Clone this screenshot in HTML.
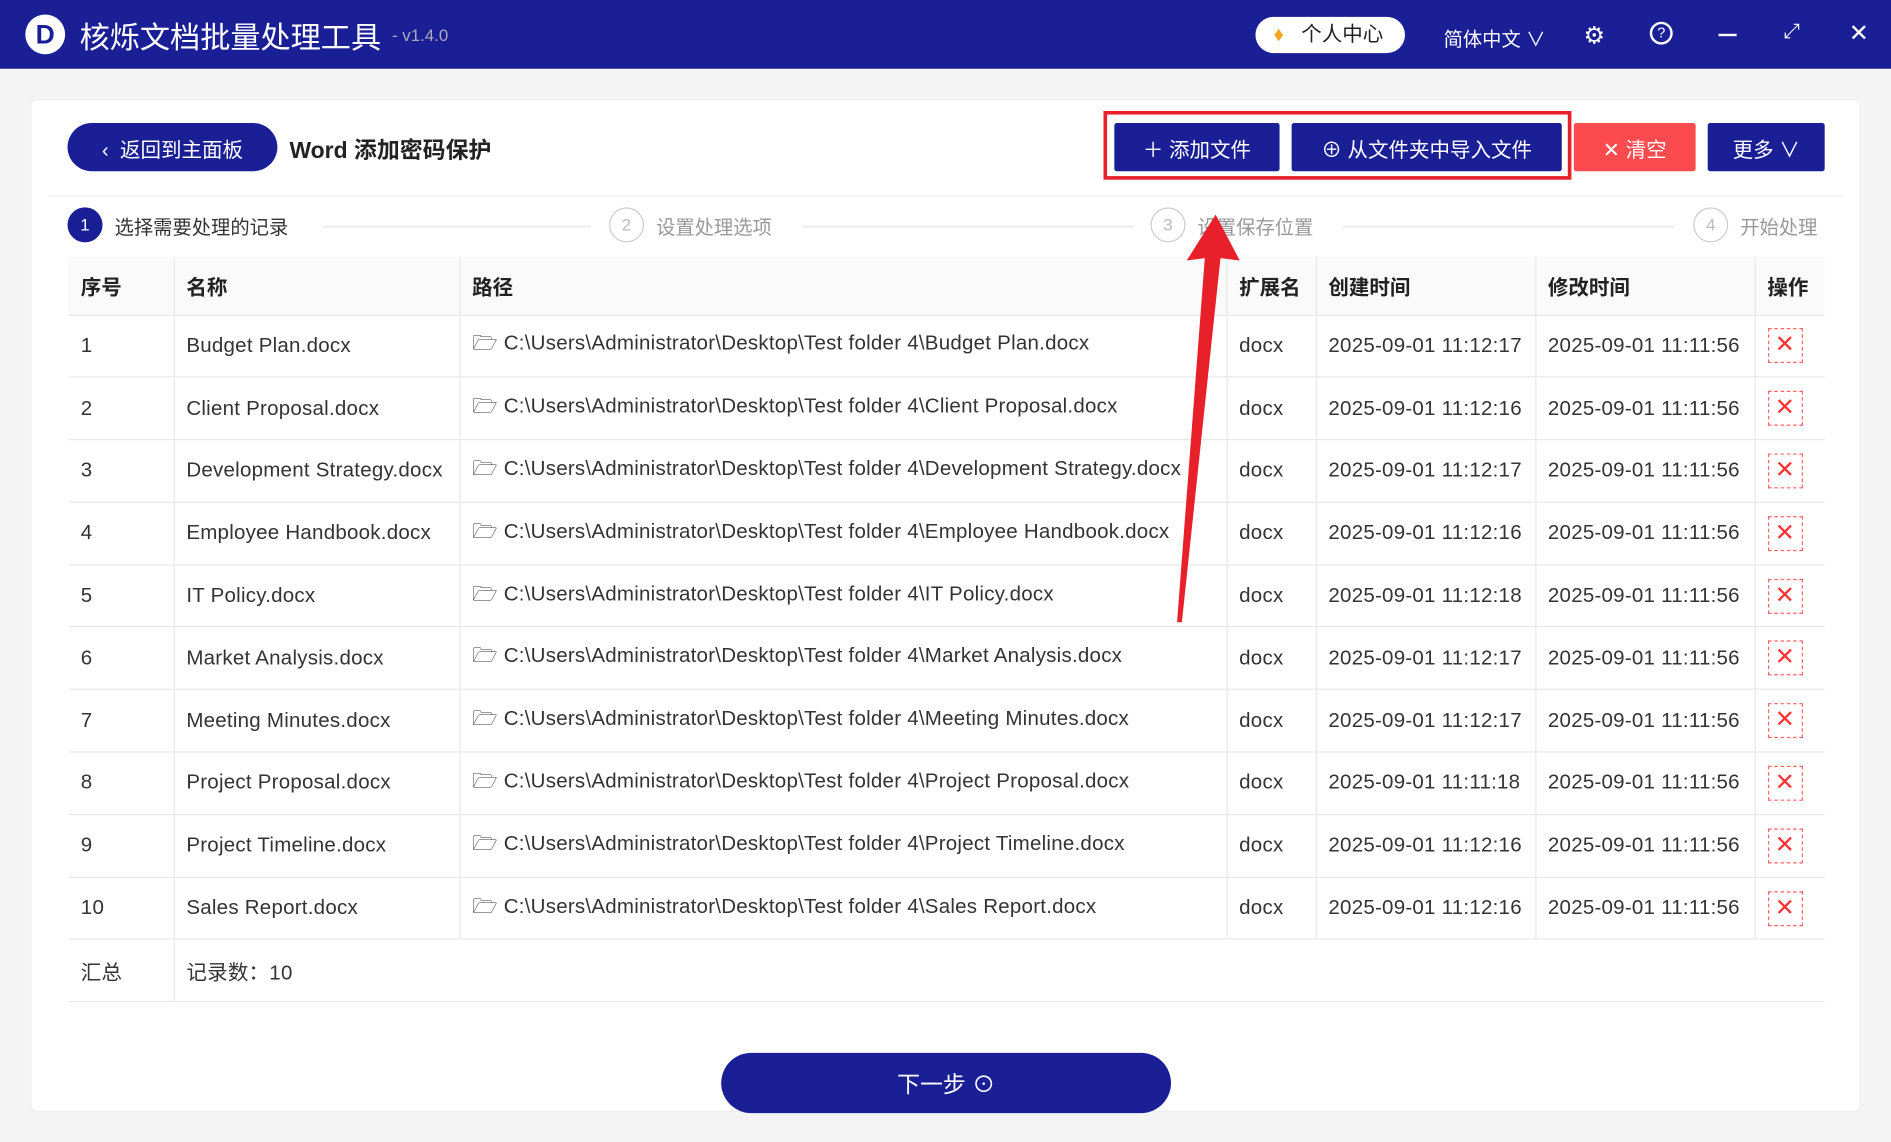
<!DOCTYPE html>
<html><head><meta charset="utf-8"><style>
*{margin:0;padding:0;box-sizing:border-box}
body{width:1891px;height:1142px;overflow:hidden;background:#8a9aa6;font-family:"Liberation Sans","Noto Sans CJK SC",sans-serif}
#s{width:1568px;height:947px;transform:scale(1.206);transform-origin:0 0;position:relative;background:#f4f4f5}
.tb{position:absolute;left:0;top:0;width:1568px;height:57px;background:#1a1f96;color:#fff}
.abs{position:absolute}
.card{position:absolute;left:25px;top:82px;width:1518px;height:840px;background:#fff;border-radius:6px;border:1px solid #eee}
.btn{position:absolute;top:102px;height:40px;background:#1a1f96;color:#fff;font-size:17px;display:flex;align-items:center;justify-content:center;border-radius:2px}
table{position:absolute;left:57px;top:213px;width:1456px;border-collapse:collapse;font-size:17px;letter-spacing:0.2px;color:#333;table-layout:fixed}
td,th{height:51.8px;border-bottom:1px solid #e8e8e8;text-align:left;padding-left:10px;white-space:nowrap;overflow:hidden}
th{height:48px;font-weight:bold;color:#222;background:#fafafa;letter-spacing:0}
td+td,th+th{border-left:1px solid #e8e8e8}
.x{display:inline-block;width:29px;height:29px;border:1px dashed #f66;color:#f33;text-align:center;line-height:27px;font-size:20px;letter-spacing:0}
.step{position:absolute;top:172px;font-size:16px;color:#999;display:flex;align-items:center}
.c{width:29px;height:29px;border-radius:50%;border:1px solid #ccc;text-align:center;line-height:27px;margin-right:10px;font-size:14px;color:#bbb}
.ln{position:absolute;top:187px;height:2px;background:#eee}
</style></head><body><div id="s">
<div class="tb">
<div class="abs" style="left:21px;top:12px;width:33px;height:33px;border-radius:50%;background:#fff;color:#1a1f96;font-weight:bold;font-size:22px;text-align:center;line-height:33px">D</div>
<div class="abs" style="left:66px;top:12px;font-size:25px">核烁文档批量处理工具</div>
<div class="abs" style="left:325px;top:21px;font-size:14px;color:#aab">- v1.4.0</div>
<div class="abs" style="left:1041px;top:14px;width:124px;height:30px;border-radius:15px;background:#fff;color:#222;font-size:17px;line-height:30px;padding-left:38px"><span style="position:absolute;left:15px;color:#f5a623">♦</span>个人中心</div>
<div class="abs" style="left:1197px;top:19px;font-size:16px">简体中文 ∨</div>
<div class="abs" style="left:1313px;top:17px;font-size:20px">⚙</div>
<div class="abs" style="left:1368px;top:18px;width:19px;height:19px;border:2px solid #fff;border-radius:50%;font-size:12px;text-align:center;line-height:15px">?</div>
<div class="abs" style="left:1425px;top:28px;width:15px;height:2px;background:#fff"></div>
<div class="abs" style="left:1479px;top:16px;font-size:17px">⤢</div>
<div class="abs" style="left:1533px;top:15px;font-size:20px">✕</div>
</div>
<div class="card"></div>
<div class="abs" style="left:40px;top:162px;width:1488px;height:1px;background:#eee"></div>
<div class="btn" style="left:56px;width:174px;border-radius:20px">‹&nbsp;&nbsp;返回到主面板</div>
<div class="abs" style="left:240px;top:110px;font-size:19px;font-weight:bold;color:#222">Word 添加密码保护</div>
<div class="abs" style="left:915px;top:92px;width:388px;height:57px;border:3px solid #e8202a"></div>
<div class="btn" style="left:924px;width:137px">＋ 添加文件</div>
<div class="btn" style="left:1071px;width:224px">⊕ 从文件夹中导入文件</div>
<div class="btn" style="left:1305px;width:101px;background:#fc4b4f">✕ 清空</div>
<div class="btn" style="left:1416px;width:97px">更多 ∨</div>
<div class="step" style="left:56px;color:#333"><div class="c" style="background:#1a1f96;border-color:#1a1f96;color:#fff">1</div>选择需要处理的记录</div>
<div class="ln" style="left:268px;width:222px"></div>
<div class="step" style="left:505px"><div class="c">2</div>设置处理选项</div>
<div class="ln" style="left:665px;width:275px"></div>
<div class="step" style="left:954px"><div class="c">3</div>设置保存位置</div>
<div class="ln" style="left:1113px;width:275px"></div>
<div class="step" style="left:1404px"><div class="c">4</div>开始处理</div>
<table>
<colgroup><col style="width:87px"><col style="width:237px"><col style="width:636px"><col style="width:74px"><col style="width:182px"><col style="width:182px"><col></colgroup>
<tr><th>序号</th><th>名称</th><th>路径</th><th>扩展名</th><th>创建时间</th><th>修改时间</th><th>操作</th></tr>
<tr><td>1</td><td>Budget Plan.docx</td><td>🗁 C:\Users\Administrator\Desktop\Test folder 4\Budget Plan.docx</td><td>docx</td><td>2025-09-01 11:12:17</td><td>2025-09-01 11:11:56</td><td><span class="x">✕</span></td></tr>
<tr><td>2</td><td>Client Proposal.docx</td><td>🗁 C:\Users\Administrator\Desktop\Test folder 4\Client Proposal.docx</td><td>docx</td><td>2025-09-01 11:12:16</td><td>2025-09-01 11:11:56</td><td><span class="x">✕</span></td></tr>
<tr><td>3</td><td>Development Strategy.docx</td><td>🗁 C:\Users\Administrator\Desktop\Test folder 4\Development Strategy.docx</td><td>docx</td><td>2025-09-01 11:12:17</td><td>2025-09-01 11:11:56</td><td><span class="x">✕</span></td></tr>
<tr><td>4</td><td>Employee Handbook.docx</td><td>🗁 C:\Users\Administrator\Desktop\Test folder 4\Employee Handbook.docx</td><td>docx</td><td>2025-09-01 11:12:16</td><td>2025-09-01 11:11:56</td><td><span class="x">✕</span></td></tr>
<tr><td>5</td><td>IT Policy.docx</td><td>🗁 C:\Users\Administrator\Desktop\Test folder 4\IT Policy.docx</td><td>docx</td><td>2025-09-01 11:12:18</td><td>2025-09-01 11:11:56</td><td><span class="x">✕</span></td></tr>
<tr><td>6</td><td>Market Analysis.docx</td><td>🗁 C:\Users\Administrator\Desktop\Test folder 4\Market Analysis.docx</td><td>docx</td><td>2025-09-01 11:12:17</td><td>2025-09-01 11:11:56</td><td><span class="x">✕</span></td></tr>
<tr><td>7</td><td>Meeting Minutes.docx</td><td>🗁 C:\Users\Administrator\Desktop\Test folder 4\Meeting Minutes.docx</td><td>docx</td><td>2025-09-01 11:12:17</td><td>2025-09-01 11:11:56</td><td><span class="x">✕</span></td></tr>
<tr><td>8</td><td>Project Proposal.docx</td><td>🗁 C:\Users\Administrator\Desktop\Test folder 4\Project Proposal.docx</td><td>docx</td><td>2025-09-01 11:11:18</td><td>2025-09-01 11:11:56</td><td><span class="x">✕</span></td></tr>
<tr><td>9</td><td>Project Timeline.docx</td><td>🗁 C:\Users\Administrator\Desktop\Test folder 4\Project Timeline.docx</td><td>docx</td><td>2025-09-01 11:12:16</td><td>2025-09-01 11:11:56</td><td><span class="x">✕</span></td></tr>
<tr><td>10</td><td>Sales Report.docx</td><td>🗁 C:\Users\Administrator\Desktop\Test folder 4\Sales Report.docx</td><td>docx</td><td>2025-09-01 11:12:16</td><td>2025-09-01 11:11:56</td><td><span class="x">✕</span></td></tr>
<tr><td style="height:48px">汇总</td><td colspan="6">记录数：10</td></tr>
</table>
<div class="btn" style="left:598px;top:873px;width:373px;height:50px;border-radius:25px;font-size:19px">下一步 ⊙</div>
<svg class="abs" style="left:0;top:0" width="1568" height="947"><polygon points="1008,178 984,216 999,214 976,516 980,516 1012,214 1028,216" fill="#e8202a"/></svg>
</div></body></html>
